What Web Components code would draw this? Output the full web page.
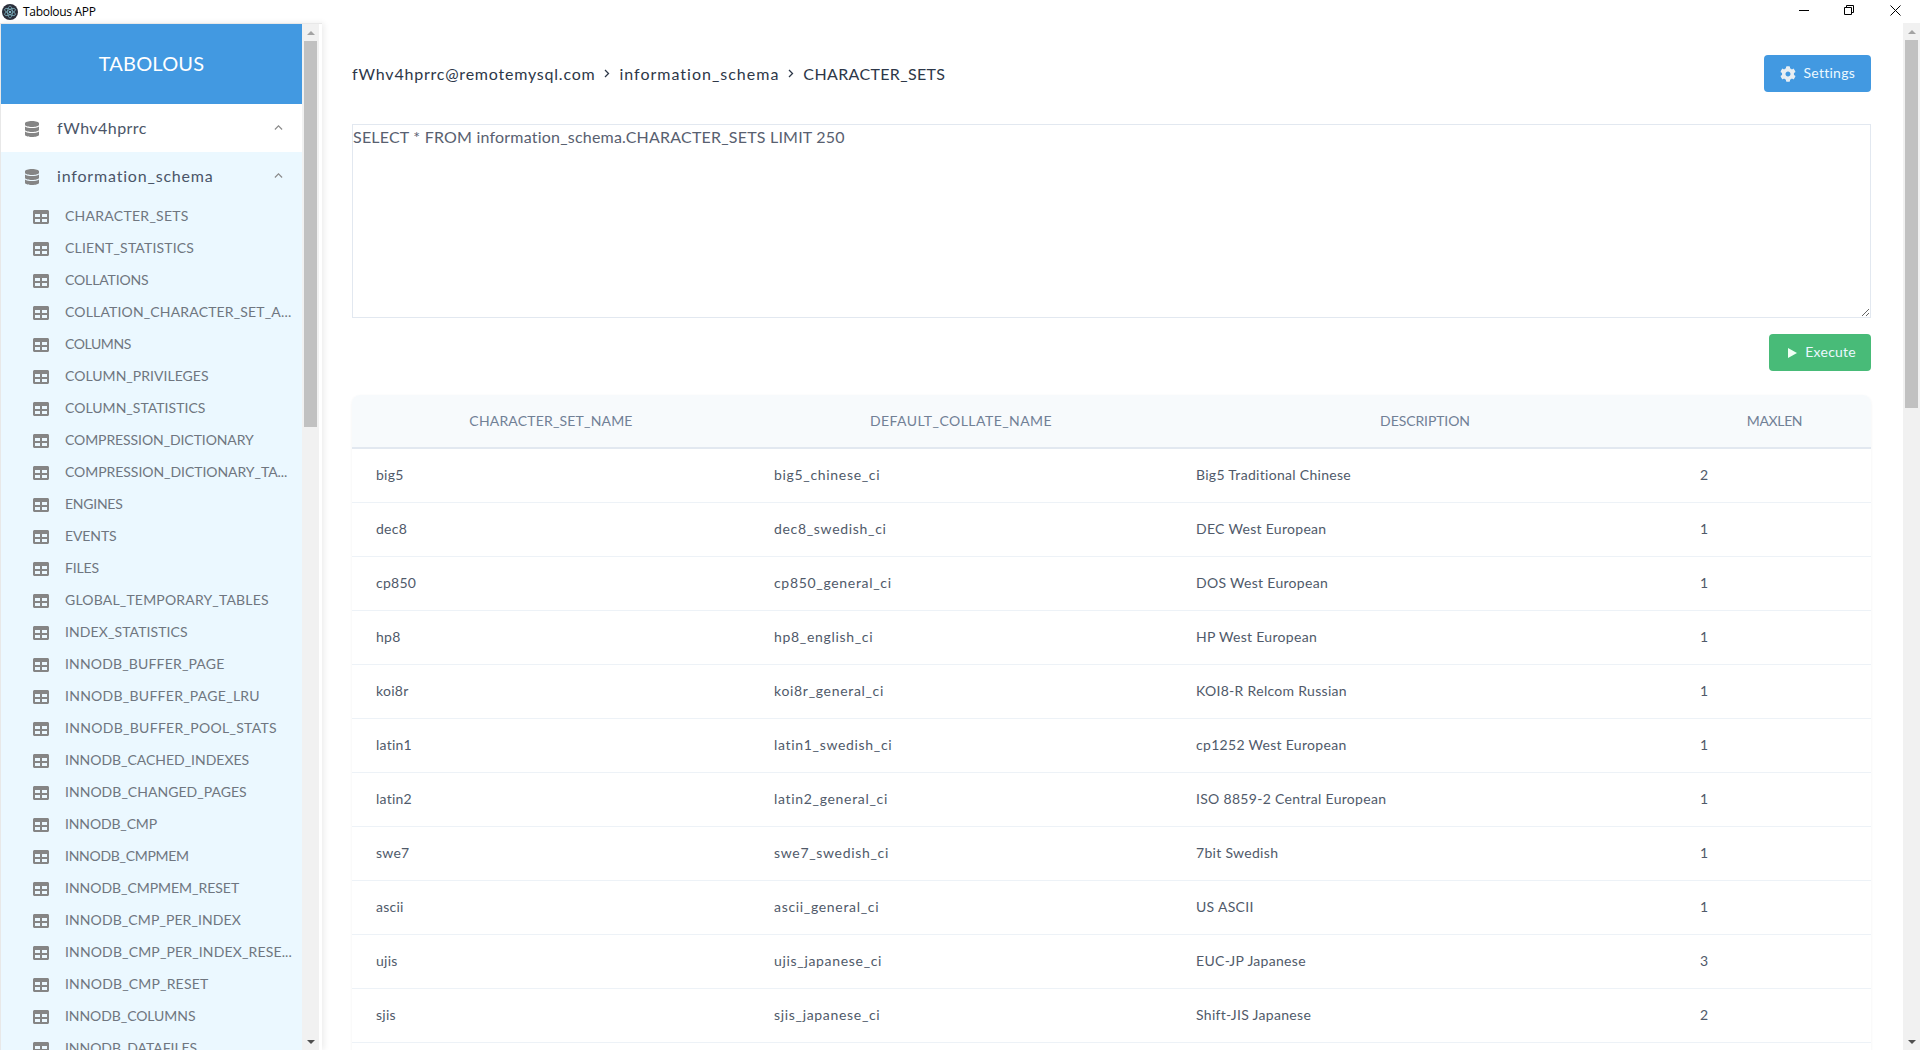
<!DOCTYPE html>
<html>
<head>
<meta charset="utf-8">
<title>Tabolous APP</title>
<style>
  html, body { margin: 0; height: 100%; overflow: hidden; background: #fff; }
  body { font-family: "Lato", "Open Sans", sans-serif; }
</style>
</head>
<body>
<tabolous-app></tabolous-app>

<script>
const icons = {
  database: `<svg viewBox="0 0 448 512" fill="currentColor"><path d="M448 73.143v45.714C448 159.143 347.667 192 224 192S0 159.143 0 118.857V73.143C0 32.857 100.333 0 224 0s224 32.857 224 73.143zM448 176v102.857C448 319.143 347.667 352 224 352S0 319.143 0 278.857V176c48.125 33.143 136.208 48.572 224 48.572S399.874 209.143 448 176zm0 160v102.857C448 479.143 347.667 512 224 512S0 479.143 0 438.857V336c48.125 33.143 136.208 48.572 224 48.572S399.874 369.143 448 336z"/></svg>`,
  table: `<svg viewBox="0 32 512 448" fill="currentColor"><path d="M464 32H48C21.49 32 0 53.49 0 80v352c0 26.51 21.49 48 48 48h416c26.51 0 48-21.49 48-48V80c0-26.51-21.49-48-48-48zM224 416H64v-96h160v96zm0-160H64v-96h160v96zm224 160H288v-96h160v96zm0-160H288v-96h160v96z"/></svg>`,
  cog: `<svg viewBox="0 0 512 512" fill="currentColor"><path d="M487.4 315.7l-42.6-24.6c4.3-23.2 4.3-47 0-70.2l42.6-24.6c4.9-2.8 7.1-8.6 5.5-14-11.1-35.6-30-67.8-54.7-94.6-3.8-4.1-10-5.1-14.8-2.3L380.8 110c-17.9-15.4-38.5-27.3-60.8-35.1V25.8c0-5.6-3.9-10.5-9.4-11.7-36.7-8.2-74.3-7.8-109.2 0-5.5 1.2-9.4 6.1-9.4 11.7V75c-22.2 7.9-42.8 19.8-60.8 35.1L88.7 85.5c-4.9-2.8-11-1.9-14.8 2.3-24.7 26.7-43.6 58.9-54.7 94.6-1.7 5.4.6 11.2 5.5 14L67.3 221c-4.3 23.2-4.3 47 0 70.2l-42.6 24.6c-4.9 2.8-7.1 8.6-5.5 14 11.1 35.6 30 67.8 54.7 94.6 3.8 4.1 10 5.1 14.8 2.3l42.6-24.6c17.9 15.4 38.5 27.3 60.8 35.1v49.2c0 5.6 3.9 10.5 9.4 11.7 36.7 8.2 74.3 7.8 109.2 0 5.5-1.2 9.4-6.1 9.4-11.7v-49.2c22.2-7.9 42.8-19.8 60.8-35.1l42.6 24.6c4.9 2.8 11 1.9 14.8-2.3 24.7-26.7 43.6-58.9 54.7-94.6 1.5-5.5-.7-11.3-5.6-14.1zM256 336c-44.1 0-80-35.9-80-80s35.9-80 80-80 80 35.9 80 80-35.9 80-80 80z"/></svg>`,
  chevron: `<svg viewBox="0 0 10 6" fill="none" stroke="currentColor" stroke-width="1.3"><path d="M1 5l4-4 4 4"/></svg>`,
  play: `<svg viewBox="0 0 9 10" fill="currentColor"><path d="M0 0l9 5-9 5z"/></svg>`,
};

// name, letter-spacing: the font is a stand-in, so each label gets its own tracking
const tableNames = [
  ["CHARACTER_SETS", .27], ["CLIENT_STATISTICS", .17], ["COLLATIONS", -.14], ["COLLATION_CHARACTER_SET_A...", .16],
  ["COLUMNS", -.42], ["COLUMN_PRIVILEGES", .03], ["COLUMN_STATISTICS", .03], ["COMPRESSION_DICTIONARY", -.09],
  ["COMPRESSION_DICTIONARY_TA...", -.05], ["ENGINES", -.25], ["EVENTS", -.1], ["FILES", -.14], ["GLOBAL_TEMPORARY_TABLES", .18],
  ["INDEX_STATISTICS", .1], ["INNODB_BUFFER_PAGE", .17], ["INNODB_BUFFER_PAGE_LRU", .27], ["INNODB_BUFFER_POOL_STATS", .3],
  ["INNODB_CACHED_INDEXES", -.02], ["INNODB_CHANGED_PAGES", .03], ["INNODB_CMP", -.14], ["INNODB_CMPMEM", -.28],
  ["INNODB_CMPMEM_RESET", -.03], ["INNODB_CMP_PER_INDEX", .1], ["INNODB_CMP_PER_INDEX_RESE...", .15],
  ["INNODB_CMP_RESET", .17], ["INNODB_COLUMNS", -.07], ["INNODB_DATAFILES", -.05],
];

const columns = ["CHARACTER_SET_NAME", "DEFAULT_COLLATE_NAME", "DESCRIPTION", "MAXLEN"];
const rows = [
  ["big5", "big5_chinese_ci", "Big5 Traditional Chinese", "2"],
  ["dec8", "dec8_swedish_ci", "DEC West European", "1"],
  ["cp850", "cp850_general_ci", "DOS West European", "1"],
  ["hp8", "hp8_english_ci", "HP West European", "1"],
  ["koi8r", "koi8r_general_ci", "KOI8-R Relcom Russian", "1"],
  ["latin1", "latin1_swedish_ci", "cp1252 West European", "1"],
  ["latin2", "latin2_general_ci", "ISO 8859-2 Central European", "1"],
  ["swe7", "swe7_swedish_ci", "7bit Swedish", "1"],
  ["ascii", "ascii_general_ci", "US ASCII", "1"],
  ["ujis", "ujis_japanese_ci", "EUC-JP Japanese", "3"],
  ["sjis", "sjis_japanese_ci", "Shift-JIS Japanese", "2"],
  ["", "", "", ""],
];

class TitleBar extends HTMLElement {
  constructor() {
    super();
    this.attachShadow({ mode: "open" });
    this.shadowRoot.innerHTML = `
<style>
:host{ display:flex; align-items:center; height:23px; background:#fff; font:12px "Open Sans",sans-serif; color:#000; }
.logo{ width:16px; height:16px; margin:0 5px 0 2px; flex:none; }
.name{ flex:1; letter-spacing:-.3px; }
.win{ display:flex; padding:0 2px 3px 0; }
.win svg{ width:10px; height:10px; display:block; }
.btn{ width:46px; display:flex; justify-content:center; align-items:center; }
.btn:first-child svg{ margin-left:2px; }
</style>
<svg class="logo" viewBox="0 0 16 16">
  <circle cx="8" cy="8" r="8" fill="#2b2e3a"/>
  <g fill="none" stroke="#9feaf9" stroke-width=".7" opacity=".75">
    <ellipse cx="8" cy="8" rx="6" ry="2.4" transform="rotate(30 8 8)"/>
    <ellipse cx="8" cy="8" rx="6" ry="2.4" transform="rotate(90 8 8)"/>
    <ellipse cx="8" cy="8" rx="6" ry="2.4" transform="rotate(150 8 8)"/>
  </g>
  <circle cx="8" cy="8" r="1" fill="#9feaf9"/>
</svg>
<span class="name"><slot></slot></span>
<div class="win">
  <div class="btn"><svg viewBox="0 0 10 10" stroke="#000" fill="none"><path d="M0 5.5h10"/></svg></div>
  <div class="btn"><svg viewBox="0 0 10 10" stroke="#000" fill="none"><path d="M.5 2.5h7v7h-7zM2.5 2.5v-2h7v7h-2"/></svg></div>
  <div class="btn"><svg style="width:11px;height:11px" viewBox="0 0 11 11" stroke="#000" fill="none"><path d="M.5 .5l10 10M10.5 .5l-10 10"/></svg></div>
</div>`;
  }
}

class ScrollBar extends HTMLElement {
  constructor() {
    super();
    this.attachShadow({ mode: "open" });
    this.shadowRoot.innerHTML = `
<style>
:host{ display:flex; flex-direction:column; width:17px; flex:none; background:#f1f1f1; }
.arrow{ height:17px; display:flex; align-items:center; justify-content:center; flex:none; }
.up{ width:0; height:0; border:4px solid transparent; border-top:0; border-bottom:4px solid #a3a3a3; }
.down{ width:0; height:0; border:4px solid transparent; border-bottom:0; border-top:4px solid #505050; }
.thumb{ margin:0 2px; background:#c1c1c1; flex:none; }
.rest{ flex:1; }
</style>
<div class="arrow"><div class="up"></div></div>
<div class="thumb" style="height:${this.getAttribute("thumb")}px"></div>
<div class="rest"></div>
<div class="arrow"><div class="down"></div></div>`;
  }
}

class DbRow extends HTMLElement {
  constructor() {
    super();
    this.attachShadow({ mode: "open" });
    this.shadowRoot.innerHTML = `
<style>
:host{ display:block; }
.head{ display:flex; align-items:center; height:48px; padding:0 19px 0 24px; color:#4a5568; font-size:16px; letter-spacing:${this.getAttribute("track")}px; }
.db{ width:14px; height:16px; color:#858585; margin:2px 18px 0 0; flex:none; }
.label{ flex:1; margin-bottom:2px; }
.chev{ width:9px; height:6px; color:#8a8a8a; }
.chev svg,.db svg{ display:block; }
</style>
<div class="head">
  <div class="db">${icons.database}</div>
  <div class="label">${this.getAttribute("name")}</div>
  <div class="chev">${icons.chevron}</div>
</div>
<slot></slot>`;
  }
}

class TableItem extends HTMLElement {
  constructor() {
    super();
    this.attachShadow({ mode: "open" });
    this.shadowRoot.innerHTML = `
<style>
:host{ display:flex; align-items:center; height:32px; padding-left:32px; color:#6f7680; font-size:14px; white-space:nowrap; }
.ic{ width:16px; height:14px; color:#858585; margin:2px 16px 0 0; flex:none; }
.ic svg{ display:block; }
slot{ display:block; margin-bottom:2px; letter-spacing:${this.getAttribute("track")}px; }
</style>
<div class="ic">${icons.table}</div>
<slot></slot>`;
  }
}

class SideBar extends HTMLElement {
  constructor() {
    super();
    this.attachShadow({ mode: "open" });
    this.shadowRoot.innerHTML = `
<style>
:host{ display:flex; width:322px; flex:none; box-sizing:border-box; height:100%; border-top:1px solid #e8e8e8; border-left:1px solid #e8e8e8; background:#fff; box-shadow:2px 0 6px rgba(0,0,0,.08); position:relative; }
.content{ width:301px; flex:none; overflow:hidden; display:flex; flex-direction:column; }
.brand{ height:78px; padding-bottom:2px; flex:none; background:#4299e1; color:#fff; font-size:20px; letter-spacing:.2px; display:flex; align-items:center; justify-content:center; }
.open{ background:#ebf8ff; }
</style>
<div class="content">
  <div class="brand">TABOLOUS</div>
  <db-row name="fWhv4hprrc" track=".45"></db-row>
  <db-row class="open" name="information_schema" track=".82">
    ${tableNames.map(([n, t]) => `<table-item track="${t}">${n}</table-item>`).join("")}
  </db-row>
</div>
<scroll-bar thumb="386"></scroll-bar>`;
  }
}

class TopBar extends HTMLElement {
  constructor() {
    super();
    this.attachShadow({ mode: "open" });
    const sep = `<div class="sep"><svg viewBox="0 0 6 9" fill="none" stroke="#2d3748" stroke-width="1.3"><path d="M1 1l3.5 3.5L1 8"/></svg></div>`;
    this.shadowRoot.innerHTML = `
<style>
:host{ display:flex; align-items:center; justify-content:space-between; flex:none; color:#2d3748; font-size:16px; }
.crumbs{ display:flex; align-items:center; }
.sep{ width:6px; height:9px; margin:0 9px; }
.sep svg{ display:block; }
</style>
<div class="crumbs">
  <span style="letter-spacing:.78px">fWhv4hprrc@remotemysql.com</span>
  ${sep}
  <span style="letter-spacing:1px">information_schema</span>
  ${sep}
  <span style="letter-spacing:.35px">CHARACTER_SETS</span>
</div>
<slot></slot>`;
  }
}

class UiButton extends HTMLElement {
  constructor() {
    super();
    this.attachShadow({ mode: "open" });
    const icon = this.getAttribute("icon");
    this.shadowRoot.innerHTML = `
<style>
:host{ display:inline-flex; align-items:center; height:37px; box-sizing:border-box; padding:0 16px; border-radius:4px; color:#ebf8ff; font-size:14px; letter-spacing:.25px; background:var(--btn,#4299e1); }
.cog{ width:16px; height:16px; margin-right:8px; color:#e9eef2; }
.play{ width:9px; height:10px; margin:0 8px 0 3px; color:#f0fff4; }
svg{ display:block; }
slot{ display:block; margin-bottom:2px; }
</style>
<div class="${icon}">${icons[icon]}</div>
<slot></slot>`;
  }
}

class QueryBox extends HTMLElement {
  constructor() {
    super();
    this.attachShadow({ mode: "open" });
    this.shadowRoot.innerHTML = `
<style>
:host{ display:block; height:194px; flex:none; }
textarea{ display:block; width:100%; height:100%; box-sizing:border-box; margin:0; padding:1px 0 0 0; border:1px solid #e2e8f0; outline:0; color:#586070; font:16px/21px "Lato",sans-serif; letter-spacing:.21px; background:#fff; }
</style>
<textarea spellcheck="false"></textarea>`;
    this.shadowRoot.querySelector("textarea").textContent = this.getAttribute("value");
  }
}

class DataTable extends HTMLElement {
  constructor() {
    super();
    this.attachShadow({ mode: "open" });
    const head = columns.map(c => `<th>${c}</th>`).join("");
    const body = rows.map(r => `<tr>${r.map(v => `<td>${v}</td>`).join("")}</tr>`).join("");
    this.shadowRoot.innerHTML = `
<style>
:host{ display:block; flex:none; box-shadow:0 1px 3px rgba(0,0,0,.06); border-radius:8px 8px 0 0; }
table{ width:100%; table-layout:fixed; border-collapse:separate; border-spacing:0; font-size:14px; letter-spacing:.25px; }
th{ height:50px; padding:0 0 2px; background:#f7fafc; border-bottom:2px solid #e2e8f0; color:#718096; font-weight:400; text-align:center; letter-spacing:.45px; }
th:nth-child(1){ border-top-left-radius:8px; letter-spacing:.18px; }
th:nth-child(3){ letter-spacing:-.1px; }
th:nth-child(4){ border-top-right-radius:8px; letter-spacing:-.35px; }
td{ height:51px; padding:0 24px 2px; border-bottom:1px solid #edf2f7; color:#505a6a; }
td:nth-child(2){ letter-spacing:.68px; }
td:nth-child(3){ letter-spacing:.3px; }
td:nth-child(4){ padding-left:22px; }
</style>
<table>
  <colgroup><col style="width:398px"><col style="width:422px"><col style="width:506px"><col></colgroup>
  <thead><tr>${head}</tr></thead>
  <tbody>${body}</tbody>
</table>`;
  }
}

class TabolousApp extends HTMLElement {
  constructor() {
    super();
    this.attachShadow({ mode: "open" });
    this.shadowRoot.innerHTML = `
<style>
:host{ display:flex; flex-direction:column; height:1050px; overflow:hidden; }
.body{ flex:1; display:flex; min-height:0; }
main{ flex:1; min-width:0; overflow:hidden; padding:32px 32px 0 30px; display:flex; flex-direction:column; }
query-box{ margin-top:32px; }
.run{ display:flex; flex:none; justify-content:flex-end; margin:16px 0 24px; }
.green{ --btn:#48bb78; padding-right:15px; }
</style>
<title-bar>Tabolous APP</title-bar>
<div class="body">
  <side-bar></side-bar>
  <main>
    <top-bar><ui-button icon="cog">Settings</ui-button></top-bar>
    <query-box value="SELECT * FROM information_schema.CHARACTER_SETS LIMIT 250"></query-box>
    <div class="run"><ui-button class="green" icon="play">Execute</ui-button></div>
    <data-table></data-table>
  </main>
  <scroll-bar thumb="368"></scroll-bar>
</div>`;
  }
}

customElements.define("title-bar", TitleBar);
customElements.define("scroll-bar", ScrollBar);
customElements.define("table-item", TableItem);
customElements.define("db-row", DbRow);
customElements.define("side-bar", SideBar);
customElements.define("top-bar", TopBar);
customElements.define("ui-button", UiButton);
customElements.define("query-box", QueryBox);
customElements.define("data-table", DataTable);
customElements.define("tabolous-app", TabolousApp);
</script>
</body>
</html>
